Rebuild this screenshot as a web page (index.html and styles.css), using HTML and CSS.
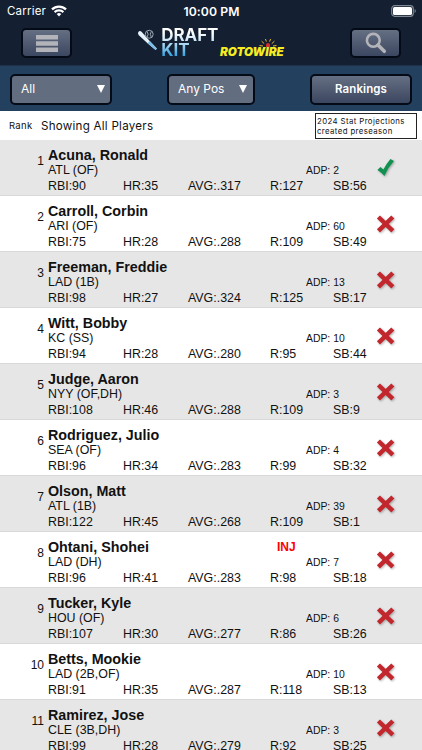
FILE: index.html
```html
<!DOCTYPE html>
<html lang="en">
<head>
  <meta charset="UTF-8" />
  <meta name="viewport" content="width=device-width, initial-scale=1.0"/>
  <title>Draft Kit</title>
  <link rel="stylesheet" href="styles.css">
</head>
<body>
  <header>
    <div class="status-bar">
      <span class="carrier">Carrier
        <svg width="16" height="12" viewBox="0 0 16 12" fill="none" stroke="#fff" stroke-width="2.2">
          <path d="M1 4.4a10 10 0 0 1 14 0M3.6 7.1a6.3 6.3 0 0 1 8.8 0"/>
          <path d="M8 11.4L5.7 9.1a3.3 3.3 0 0 1 4.6 0z" fill="#fff" stroke="none"/>
        </svg>
      </span>
      <span class="time">10:00 PM</span>
      <svg class="battery" width="26" height="12" viewBox="0 0 26 12">
        <rect x=".7" y=".7" width="21.6" height="10.6" rx="3" fill="none" stroke="#7f8792" stroke-width="1.2"/>
        <rect x="2" y="2" width="19" height="8" rx="1.6" fill="#fff"/>
        <path d="M23.6 4c1.6.6 1.6 3.4 0 4z" fill="#7f8792"/>
      </svg>
    </div>
    <div class="title-bar">
      <button class="btn icon-btn" aria-label="Menu">
        <svg width="22" height="17" viewBox="0 0 22 17" fill="#b3b4b9">
          <path d="M0 0h22v4.4H0zM0 6.3h22v4.4H0zM0 12.6h22V17H0z"/>
        </svg>
      </button>
      <div class="logos">
        <svg class="bat" width="22" height="24" viewBox="0 0 22 24">
          <path d="M1.2 3.2Q2.6.8 4.6 2.6L12.8 12L20 19.6L18.7 21L10.6 14.2L1.8 6.2Q.6 4.8 1.2 3.2z" fill="#e6f3fa"/>
          <path d="M10.6 14.2L12.8 12L20 19.6L18.7 21z" fill="#79bde8"/>
          <circle cx="12.3" cy="5.2" r="4" fill="#141f31" stroke="#a9b5c0" stroke-width=".9"/>
          <path d="M10.2 2.4q2 2.8 0 5.6M14.4 2.4q-2 2.8 0 5.6" fill="none" stroke="#a9b5c0" stroke-width=".9"/>
        </svg>
        <div class="draft-kit"><span>DRAFT</span><span>KIT</span></div>
        <div class="rotowire">
          <svg width="22" height="9" viewBox="0 0 22 9" fill="none" stroke="#e3b52c">
            <path d="M2.5 7.5l3.5.5M4.6 3.2l2.6 2.4M8.4 1l1 2.6M13.6 1l-1 2.6M17.4 3.2l-2.6 2.4M19.5 7.5l-3.5.5" stroke-width="1"/>
            <path d="M9 9V7a2 2 0 0 1 4 0v2z" fill="#d62f31" stroke="none"/>
          </svg>
          <span>ROTOWIRE</span>
        </div>
      </div>
      <button class="btn icon-btn" aria-label="Search">
        <svg width="22" height="22" viewBox="0 0 22 22" fill="none" stroke="#b3b4b9">
          <circle cx="8.3" cy="8.3" r="6.4" stroke-width="2.6"/>
          <path d="M13 13l6.3 6.3" stroke-width="3.6" stroke-linecap="round"/>
        </svg>
      </button>
    </div>
    <div class="filters">
      <div class="select team-select">All <i></i></div>
      <div class="select pos-select">Any Pos <i></i></div>
      <button class="btn rankings">Rankings</button>
    </div>
  </header>

  <div class="info">
    <span class="rank-label">Rank</span>
    <span class="showing">Showing All Players</span>
    <span class="note">2024 Stat Projections<br>created preseason</span>
  </div>

  <ul id="players"></ul>

  <script>
    const players = [
      { name: 'Acuna, Ronald', team: 'ATL (OF)', adp: 2, rbi: 90, hr: 35, avg: '.317', r: 127, sb: 56, available: true },
      { name: 'Carroll, Corbin', team: 'ARI (OF)', adp: 60, rbi: 75, hr: 28, avg: '.288', r: 109, sb: 49 },
      { name: 'Freeman, Freddie', team: 'LAD (1B)', adp: 13, rbi: 98, hr: 27, avg: '.324', r: 125, sb: 17 },
      { name: 'Witt, Bobby', team: 'KC (SS)', adp: 10, rbi: 94, hr: 28, avg: '.280', r: 95, sb: 44 },
      { name: 'Judge, Aaron', team: 'NYY (OF,DH)', adp: 3, rbi: 108, hr: 46, avg: '.288', r: 109, sb: 9 },
      { name: 'Rodriguez, Julio', team: 'SEA (OF)', adp: 4, rbi: 96, hr: 34, avg: '.283', r: 99, sb: 32 },
      { name: 'Olson, Matt', team: 'ATL (1B)', adp: 39, rbi: 122, hr: 45, avg: '.268', r: 109, sb: 1 },
      { name: 'Ohtani, Shohei', team: 'LAD (DH)', adp: 7, rbi: 96, hr: 41, avg: '.283', r: 98, sb: 18, injured: true },
      { name: 'Tucker, Kyle', team: 'HOU (OF)', adp: 6, rbi: 107, hr: 30, avg: '.277', r: 86, sb: 26 },
      { name: 'Betts, Mookie', team: 'LAD (2B,OF)', adp: 10, rbi: 91, hr: 35, avg: '.287', r: 118, sb: 13 },
      { name: 'Ramirez, Jose', team: 'CLE (3B,DH)', adp: 3, rbi: 99, hr: 28, avg: '.279', r: 92, sb: 25 }
    ];

    const check = '<svg class="mark check" width="20" height="20" viewBox="0 0 20 20"><path d="M1.4 12L4.4 9l3 2.4Q10.6 5.4 14.4 1L18 3Q11.8 9.6 8.4 18Q5.2 14.4 1.4 12z" fill="#119150"/></svg>';
    const cross = '<svg class="mark" width="20" height="20" viewBox="0 0 20 20"><path d="M2.4 3l14.4 13.8M16.8 3L2.4 16.8" fill="none" stroke="#c1272d" stroke-width="4.4"/></svg>';

    document.getElementById('players').innerHTML = players.map((p, i) => `
      <li>
        <span class="rank">${i + 1}</span>
        <div class="player">
          <div class="line name-line"><b>${p.name}</b>${p.injured ? '<span class="inj">INJ</span>' : ''}</div>
          <div class="line team-line"><span>${p.team}</span><span class="adp">ADP: ${p.adp}</span></div>
          <div class="line stats">
            <span>RBI:${p.rbi}</span><span>HR:${p.hr}</span><span>AVG:${p.avg}</span><span>R:${p.r}</span><span>SB:${p.sb}</span>
          </div>
        </div>
        ${p.available ? check : cross}
      </li>`).join('');
  </script>
</body>
</html>
```

FILE: styles.css
```css
* {
  box-sizing: border-box;
}
body {
  margin: 0;
  height: 750px;
  overflow: hidden;
  background: #fff;
  color: #111;
  font-family: "Liberation Sans", Arial, sans-serif;
}
header {
  font-family: Inter, sans-serif;
  background: #141f31;
  color: #fff;
}
.status-bar {
  display: grid;
  grid-template-columns: 1fr auto 1fr;
  align-items: center;
  height: 22px;
  padding: 0 6px 0 7px;
}
.carrier {
  display: flex;
  align-items: center;
  gap: 5px;
  font-size: 11.5px;
  letter-spacing: 0.2px;
}
.time {
  font-size: 12.2px;
  font-weight: 600;
  letter-spacing: 0.1px;
}
.battery {
  justify-self: end;
  margin-right: -1px;
}
.title-bar {
  display: flex;
  justify-content: space-between;
  height: 43px;
  padding: 6px 21px 0;
}
.btn {
  background: linear-gradient(#656f83, #3b4660);
  border: 2px solid #040a16;
  border-radius: 5px;
  color: #fff;
  padding: 0;
  font-family: inherit;
}
.icon-btn {
  display: flex;
  align-items: center;
  justify-content: center;
  width: 51px;
  height: 30px;
}
.logos {
  display: flex;
  align-items: flex-start;
  width: 149px;
}
.bat {
  margin-top: 1px;
}
.draft-kit {
  display: flex;
  flex-direction: column;
  width: 60px;
  margin-left: 3px;
  font-size: 17px;
  line-height: 15px;
  font-weight: 700;
  letter-spacing: -0.1px;
  background: linear-gradient(#fff 15%, #c4e2f5 45%, #3da5e2 90%);
  -webkit-background-clip: text;
  background-clip: text;
  color: transparent;
}
.rotowire {
  display: flex;
  flex-direction: column;
  width: 66px;
  margin-top: 10px;
  margin-left: -1px;
  color: #f5ec22;
  font-size: 11.7px;
  line-height: 11px;
  font-weight: 900;
  font-style: italic;
}
.rotowire svg {
  margin-left: 37px;
}
.filters {
  display: flex;
  height: 46px;
  padding: 8px 10px 0;
  background: #24405f;
  border-top: 1px solid #1c304a;
}
.select {
  display: flex;
  align-items: center;
  justify-content: space-between;
  height: 31px;
  padding: 0 5px 2px 9px;
  background: #626d80;
  border: 2px solid #040a16;
  border-radius: 5px;
  font-size: 12px;
}
.select i {
  border: 4px solid transparent;
  border-top: 8px solid #fff;
  border-bottom: 0;
}
.team-select {
  width: 102px;
}
.pos-select {
  width: 88px;
  margin-left: 55px;
  padding-right: 6px;
}
.rankings {
  width: 102px;
  height: 31px;
  margin-left: auto;
  padding-bottom: 2px;
  font-size: 11.5px;
  font-weight: 600;
  letter-spacing: 0.1px;
}
.info {
  display: flex;
  align-items: center;
  height: 29px;
  padding: 0 5px 0 9px;
  font-family: Inter, sans-serif;
}
.rank-label {
  width: 32px;
  font-size: 9.5px;
  letter-spacing: 0.3px;
}
.showing {
  font-size: 11.6px;
  letter-spacing: 0.25px;
}
.note {
  width: 102px;
  height: 26px;
  margin-left: auto;
  padding: 2px 0 0 1px;
  border: 1px solid #222;
  font-size: 7.8px;
  line-height: 10px;
  letter-spacing: 0.4px;
  white-space: nowrap;
}
ul {
  list-style: none;
  margin: 0;
  padding: 0;
}
li {
  display: flex;
  height: 56px;
  border-bottom: 1px solid #d9d9dc;
}
li:nth-child(odd) {
  background: #e6e6e6;
}
.rank {
  width: 44px;
  padding-top: 14px;
  font-size: 12px;
  line-height: 14px;
  text-align: right;
}
.player {
  width: 326px;
  padding: 7px 0 0 4px;
}
.line {
  display: grid;
  font-size: 12.4px;
  line-height: 15px;
  white-space: nowrap;
}
.name-line {
  grid-template-columns: 229px 1fr;
  font-size: 14.3px;
  line-height: 16px;
}
.inj {
  color: #f00;
  font-size: 12px;
  font-weight: bold;
}
.team-line {
  grid-template-columns: 258px 1fr;
}
.adp {
  font-size: 10.4px;
}
.stats {
  grid-template-columns: 75px 65px 82px 63px 1fr;
  line-height: 17px;
}
.mark {
  margin-top: 18px;
  margin-left: 6px;
  filter: drop-shadow(1px 1px 1px rgba(0, 0, 0, 0.3));
}
```
